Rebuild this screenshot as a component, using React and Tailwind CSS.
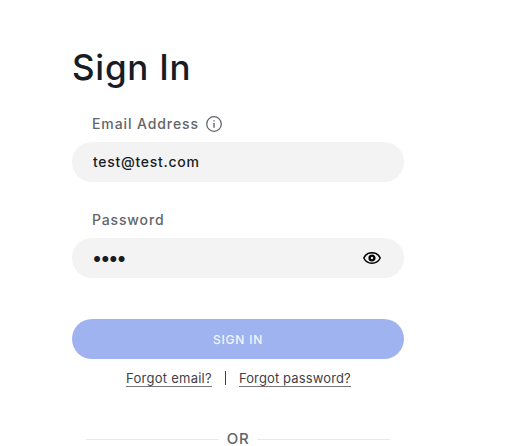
function InfoIcon() {
  return (
    <svg className="h-4 w-4 shrink-0" viewBox="0 0 16 16" fill="none" stroke="#636569" aria-hidden="true">
      <circle cx="8" cy="8" r="7.3" strokeWidth="1.3" />
      <path d="M8 7v4.8" strokeWidth="1.4" />
      <path d="M8 4.2v1.4" strokeWidth="1.4" />
    </svg>
  );
}

function EyeIcon() {
  return (
    <svg className="h-3 w-[18px]" viewBox="0 0 18 12" fill="none" stroke="#000" aria-hidden="true">
      <path d="M.8 6C2.4 2.700 5.300.8 9 .8S15.600 2.700 17.200 6C15.600 9.300 12.700 11.200 9 11.200S2.400 9.300.8 6Z" strokeWidth="1.5" />
      <circle cx="9" cy="6" r="2.400" strokeWidth="2.400" />
    </svg>
  );
}

export default function App() {
  return (
    <main className="h-[446px] overflow-hidden bg-white pl-[72px] pt-[45px] font-['Inter','Liberation_Sans',sans-serif]">
      <form className="flex w-[332px] flex-col" onSubmit={(e) => e.preventDefault()}>
        <h1 className="h-11 whitespace-nowrap text-[35px] font-medium leading-[44px] tracking-[0.75px] text-[#191c24]">Sign In</h1>
        <div className="mt-[25px] flex h-5 items-center gap-[7px] pl-5 text-[#636569]">
          <label htmlFor="email" className="whitespace-nowrap text-sm font-medium leading-5 tracking-[0.9px]">Email Address</label>
          <InfoIcon />
        </div>
        <input id="email" type="text" defaultValue="test@test.com" className="mt-2 h-10 w-full rounded-full bg-[#f3f3f3] px-[21px] pb-0.5 text-sm font-medium tracking-[0.72px] text-[#191c24] outline-none" />
        <label htmlFor="password" className="mt-7 h-5 pl-5 text-sm font-medium leading-5 tracking-[0.85px] text-[#636569]">Password</label>
        <div className="mt-2 flex h-10 items-center rounded-full bg-[#f3f3f3] pl-5 pr-[23px]">
          <input id="password" type="password" defaultValue="test" className="min-w-0 flex-1 bg-transparent pt-0.5 text-[19px] leading-6 font-medium tracking-[-2px] text-[#191c24] outline-none" />
          <button type="button" aria-label="Show password"><EyeIcon /></button>
        </div>
        <button className="mt-[41px] h-10 rounded-full bg-[#9fb3f0] pt-px text-xs font-medium tracking-[0.8px] text-[#f3f5fd]">SIGN IN</button>
        <div className="mt-3 flex h-4 items-start justify-center gap-[13px] pl-px text-[13px] leading-[15px] text-[#3f4147]">
          <a className="h-4 whitespace-nowrap border-b border-[#75777b] tracking-[0.25px]">Forgot email?</a>
          <span className="h-[14px] w-px bg-[#3f4147]" />
          <a className="h-4 whitespace-nowrap border-b border-[#75777b] tracking-[0.13px]">Forgot password?</a>
        </div>
        <div className="mt-[45px] flex h-[14px] items-center px-[14px] text-[15px] font-medium leading-[14px] text-[#636569]">
          <span className="h-px flex-1 bg-[#e8e8e8]" />
          <span className="px-2 tracking-[0.6px]">OR</span>
          <span className="h-px flex-1 bg-[#e8e8e8]" />
        </div>
      </form>
    </main>
  );
}
